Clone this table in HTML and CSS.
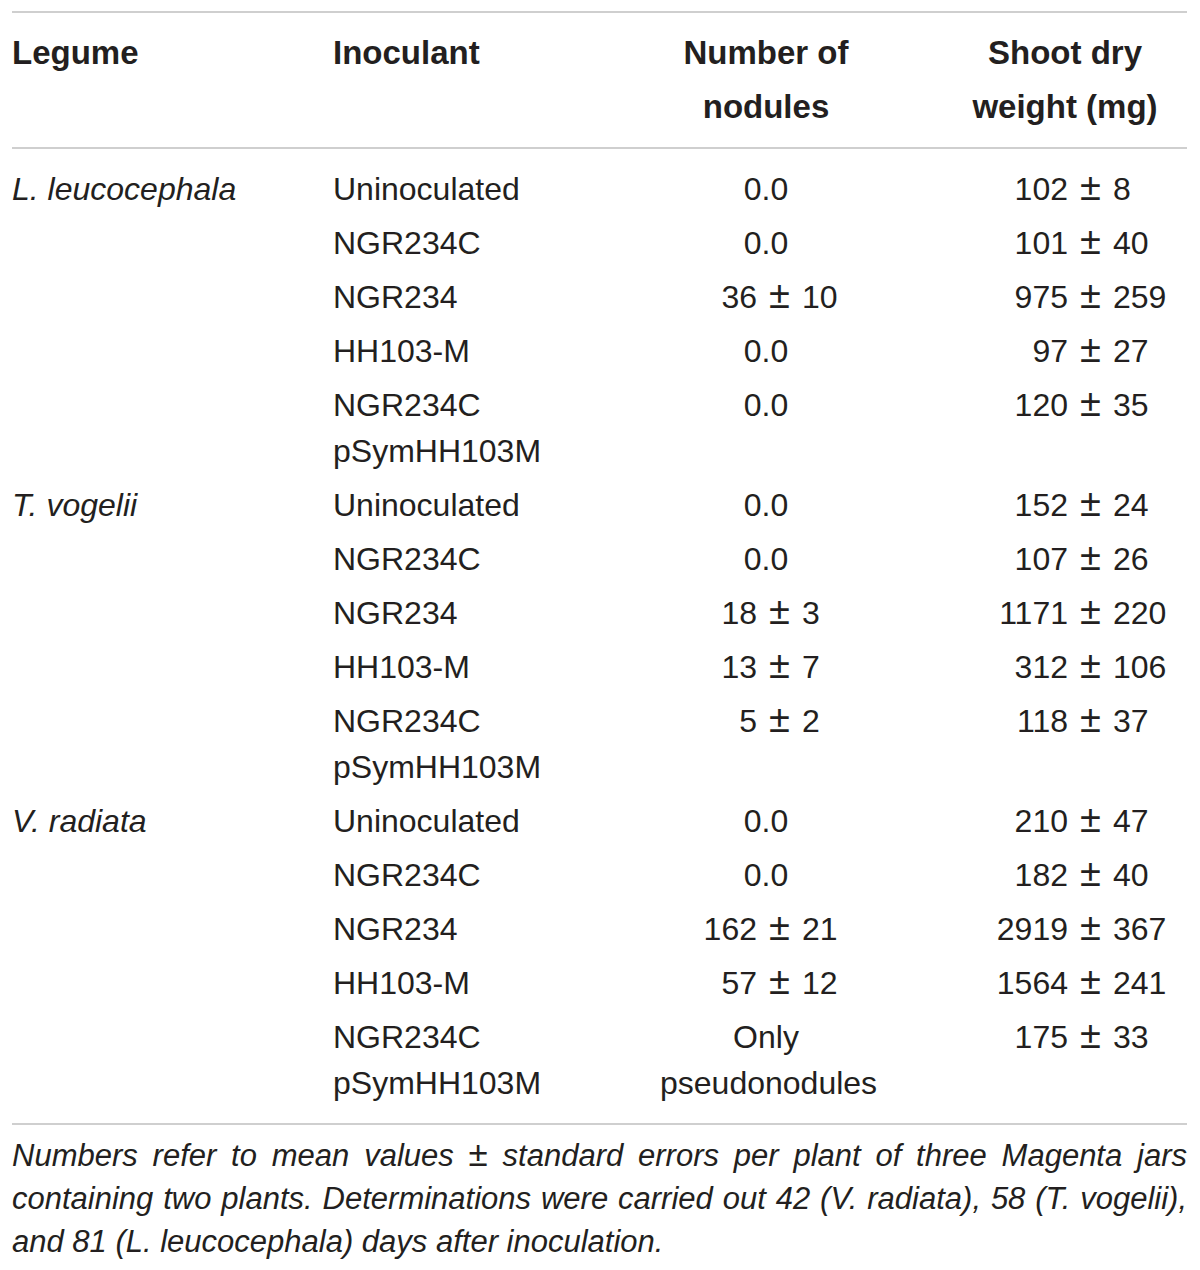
FILE: index.html
```html
<!DOCTYPE html>
<html lang="en">
<head>
    <meta charset="UTF-8">
    <title>Nodulation and shoot dry weight</title>
    <link rel="stylesheet" href="styles.css">
</head>
<body>

    <div class="page">
        <table class="data">
            <colgroup>
                <col class="w-legume">
                <col class="w-inoc">
                <col class="w-nod">
                <col class="w-weight">
            </colgroup>
            <thead>
                <tr>
                    <th>Legume</th>
                    <th>Inoculant</th>
                    <th class="mid">Number of<br>nodules</th>
                    <th class="mid wt">Shoot dry<br>weight (mg)</th>
                </tr>
            </thead>
            <tbody>
                <tr>
                    <td class="sp">L. leucocephala</td>
                    <td>Uninoculated</td>
                    <td class="mid">0.0</td>
                    <td class="wt-val"><span class="m">102</span><span class="pm">±</span><span class="e">8</span></td>
                </tr>
                <tr>
                    <td></td>
                    <td>NGR234C</td>
                    <td class="mid">0.0</td>
                    <td class="wt-val"><span class="m">101</span><span class="pm">±</span><span class="e">40</span></td>
                </tr>
                <tr>
                    <td></td>
                    <td>NGR234</td>
                    <td class="nod-val"><span class="m">36</span><span class="pm">±</span><span class="e">10</span></td>
                    <td class="wt-val"><span class="m">975</span><span class="pm">±</span><span class="e">259</span></td>
                </tr>
                <tr>
                    <td></td>
                    <td>HH103-M</td>
                    <td class="mid">0.0</td>
                    <td class="wt-val"><span class="m">97</span><span class="pm">±</span><span class="e">27</span></td>
                </tr>
                <tr>
                    <td></td>
                    <td>NGR234C<br>pSymHH103M</td>
                    <td class="mid">0.0</td>
                    <td class="wt-val"><span class="m">120</span><span class="pm">±</span><span class="e">35</span></td>
                </tr>

                <tr>
                    <td class="sp">T. vogelii</td>
                    <td>Uninoculated</td>
                    <td class="mid">0.0</td>
                    <td class="wt-val"><span class="m">152</span><span class="pm">±</span><span class="e">24</span></td>
                </tr>
                <tr>
                    <td></td>
                    <td>NGR234C</td>
                    <td class="mid">0.0</td>
                    <td class="wt-val"><span class="m">107</span><span class="pm">±</span><span class="e">26</span></td>
                </tr>
                <tr>
                    <td></td>
                    <td>NGR234</td>
                    <td class="nod-val"><span class="m">18</span><span class="pm">±</span><span class="e">3</span></td>
                    <td class="wt-val"><span class="m">1171</span><span class="pm">±</span><span class="e">220</span></td>
                </tr>
                <tr>
                    <td></td>
                    <td>HH103-M</td>
                    <td class="nod-val"><span class="m">13</span><span class="pm">±</span><span class="e">7</span></td>
                    <td class="wt-val"><span class="m">312</span><span class="pm">±</span><span class="e">106</span></td>
                </tr>
                <tr>
                    <td></td>
                    <td>NGR234C<br>pSymHH103M</td>
                    <td class="nod-val"><span class="m">5</span><span class="pm">±</span><span class="e">2</span></td>
                    <td class="wt-val"><span class="m">118</span><span class="pm">±</span><span class="e">37</span></td>
                </tr>

                <tr>
                    <td class="sp">V. radiata</td>
                    <td>Uninoculated</td>
                    <td class="mid">0.0</td>
                    <td class="wt-val"><span class="m">210</span><span class="pm">±</span><span class="e">47</span></td>
                </tr>
                <tr>
                    <td></td>
                    <td>NGR234C</td>
                    <td class="mid">0.0</td>
                    <td class="wt-val"><span class="m">182</span><span class="pm">±</span><span class="e">40</span></td>
                </tr>
                <tr>
                    <td></td>
                    <td>NGR234</td>
                    <td class="nod-val"><span class="m">162</span><span class="pm">±</span><span class="e">21</span></td>
                    <td class="wt-val"><span class="m">2919</span><span class="pm">±</span><span class="e">367</span></td>
                </tr>
                <tr>
                    <td></td>
                    <td>HH103-M</td>
                    <td class="nod-val"><span class="m">57</span><span class="pm">±</span><span class="e">12</span></td>
                    <td class="wt-val"><span class="m">1564</span><span class="pm">±</span><span class="e">241</span></td>
                </tr>
                <tr>
                    <td></td>
                    <td>NGR234C<br>pSymHH103M</td>
                    <td class="mid">Only<br>pseudonodules</td>
                    <td class="wt-val"><span class="m">175</span><span class="pm">±</span><span class="e">33</span></td>
                </tr>
            </tbody>
        </table>

        <p class="note">
            <span class="line">Numbers refer to mean values <span class="pm-s">±</span> standard errors per plant of three Magenta jars</span>
            <span class="line">containing two plants. Determinations were carried out 42 (V. radiata), 58 (T. vogelii),</span>
            <span class="line last">and 81 (L. leucocephala) days after inoculation.</span>
        </p>
    </div>

</body>
</html>
```

FILE: styles.css
```css
:root {
    --text-color: #231f20;
    --rule-color: #cfcfcf;
}

body {
    margin: 0;
    background: #ffffff;
    color: var(--text-color);
    font-family: 'Liberation Sans', Arial, sans-serif;
}

.page {
    width: 1175px;
    padding: 11px 13px 0 12px;
}

/* -- tabel -- */
.data {
    width: 1175px;
    table-layout: fixed;
    border-collapse: collapse;
    font-size: 32px;
}

.w-legume { width: 321px; }
.w-inoc { width: 327px; }
.w-nod { width: 212px; }
.w-weight { width: 315px; }

.data th {
    text-align: left;
    vertical-align: top;
    font-size: 33px;
    font-weight: 700;
    line-height: 54px;
    padding: 13px 0;
    border-top: 2px solid var(--rule-color);
    border-bottom: 2px solid var(--rule-color);
}

.data td {
    line-height: 46px;
    padding: 4px 0;
    vertical-align: top;
    white-space: nowrap;
}

.data tbody tr:first-child td {
    padding-top: 17px;
}

.data tbody tr:last-child td {
    padding-bottom: 17px;
    border-bottom: 2px solid var(--rule-color);
}

.data .mid {
    text-align: center;
}

.data th.wt {
    padding-left: 71px;
}

.sp {
    font-style: italic;
}

/* nilai ± disejajarkan di tanda ± */
.m, .pm, .e {
    display: inline-block;
}

.m { text-align: right; }
.e { text-align: left; }

.pm {
    width: 45px;
    text-align: center;
    font-size: 38px;
    line-height: 38px;
}

.nod-val .m { width: 97px; }
.wt-val .m { width: 196px; }

/* -- catatan -- */
.note {
    margin: 0;
    padding-top: 9px;
    font-size: 31px;
    line-height: 43px;
    font-style: italic;
}

.note .line {
    display: block;
    text-align: justify;
    text-align-last: justify;
}

.note .line.last {
    text-align-last: left;
}

.pm-s {
    font-size: 35px;
    font-style: normal;
    line-height: 35px;
}
```
